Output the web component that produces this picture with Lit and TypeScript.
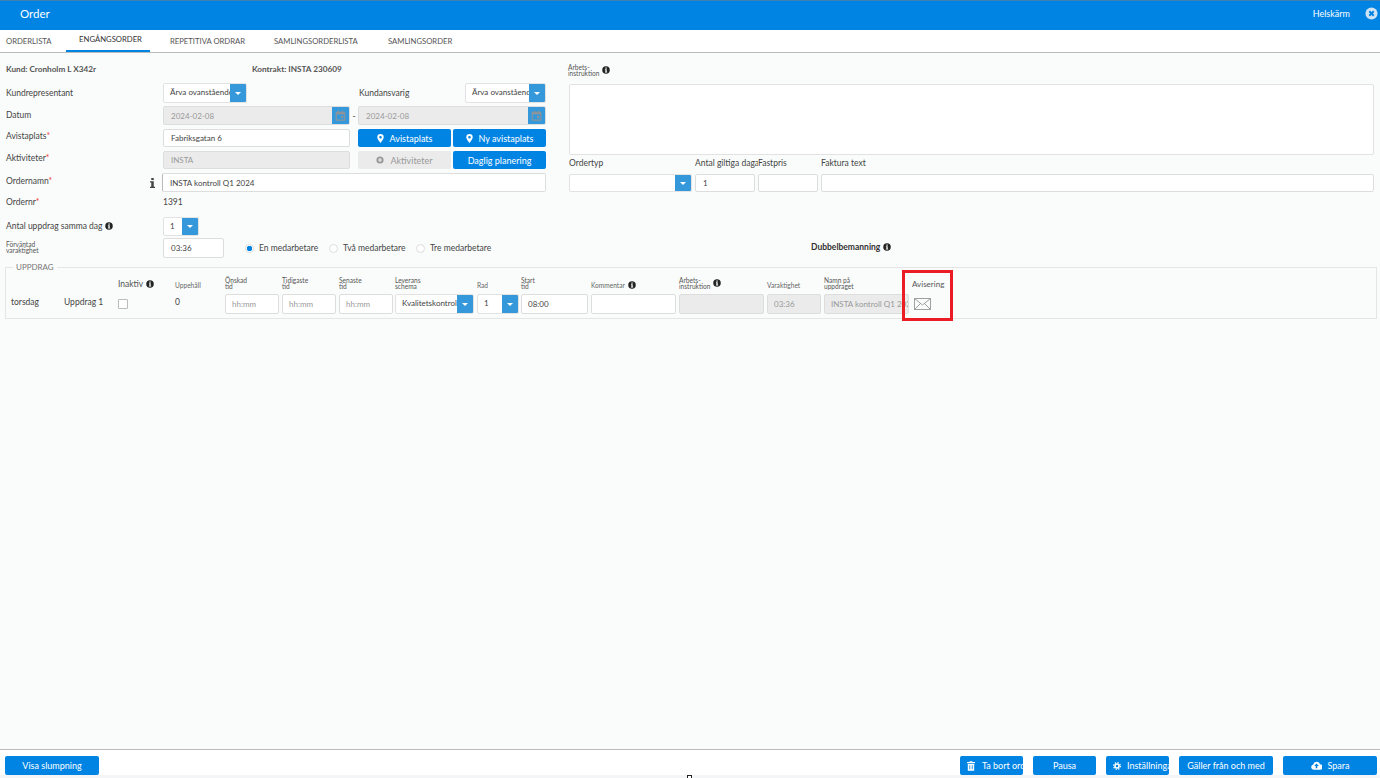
import { LitElement, css, html, svg } from "lit";
import { customElement } from "lit/decorators.js";

const info = (cls = "info") => html`<svg class=${cls} viewBox="0 0 16 16">
  <circle cx="8" cy="8" r="7.5" fill="#222"></circle>
  <rect x="6.8" y="3" width="2.6" height="2.4" fill="#fff"></rect>
  <path d="M5.8 6.6h3.6v5h1v1.4H5.8v-1.4h1V8h-1z" fill="#fff"></path>
</svg>`;

const caret = html`<svg class="caret" viewBox="0 0 8 4"><path d="M0 0h8L4 4z" fill="#fff"></path></svg>`;

const calendar = html`<svg class="cal" viewBox="0 0 12 12">
  <path d="M1.5 2h9a.8.8 0 0 1 .8.8v8a.8.8 0 0 1-.8.8h-9a.8.8 0 0 1-.8-.8v-8A.8.8 0 0 1 1.5 2zM2 5v5.4h8V5z" fill="#8a949b"></path>
  <rect x="3" y="0.5" width="1.5" height="2.5" fill="#8a949b"></rect>
  <rect x="7.5" y="0.5" width="1.5" height="2.5" fill="#8a949b"></rect>
  <rect x="6.500" y="6.500" width="2.500" height="2.500" fill="#8a949b"></rect>
</svg>`;

const pin = html`<svg class="ico pin" viewBox="0 0 10 14">
  <path fill-rule="evenodd" d="M5 0a5 5 0 0 1 5 5c0 2.8-3.4 7-5 9-1.600-2-5-6.200-5-9a5 5 0 0 1 5-5zm0 3a2 2 0 1 0 0 4 2 2 0 0 0 0-4z" fill="#fff"></path>
</svg>`;

const select = (value: string, cls = "") => html`
  <div class="select ${cls}">
    <span class="sel-text">${value}</span>
    <span class="sel-btn">${caret}</span>
  </div>
`;

const dateField = (value: string, cls: string) => html`
  <div class="input disabled date ${cls}">
    <span>${value}</span>
    <span class="cal-btn">${calendar}</span>
  </div>
`;

const radio = (label: string, cls: string, on = false) => html`
  <span class="radio-item ${cls}"><span class="radio ${on ? "on" : ""}"></span>${label}</span>
`;

const req = (label: string) => html`${label}<span class="req">*</span>`;

const stacked = (a: string, b: string) => html`<span class="stacked">${a}<br />${b}</span>`;

@customElement("app-root")
export class AppRoot extends LitElement {
  static styles = css`
    :host {
      display: flex;
      flex-direction: column;
      height: 778px;
      overflow: hidden;
      background: #fafcfb;
      color: #444;
      font-family: Lato, "Liberation Sans", sans-serif;
      font-size: 8.500px;
    }
    * {
      box-sizing: border-box;
    }
    .header {
      height: 30px;
      flex: none;
      background: #0084e4;
      border-top: 1px solid #3f80b0;
      color: #fff;
      display: flex;
      align-items: center;
      justify-content: space-between;
      padding: 0 2px 4px 20px;
    }
    .title {
      font-size: 11.500px;
    }
    .full {
      display: flex;
      align-items: center;
      gap: 15px;
      font-size: 9px;
    }
    .close {
      width: 13px;
      height: 13px;
    }
    .tabs {
      height: 23px;
      flex: none;
      display: flex;
      background: #fff;
      border-bottom: 1px solid #bbb;
      font-size: 7.700px;
      color: #555;
    }
    .tab {
      padding-top: 6px;
      text-transform: uppercase;
    }
    .tab.first {
      margin-left: 6px;
      width: 60px;
    }
    .tab.active {
      width: 84px;
      margin: 0 20px 0 0;
      text-align: center;
      padding: 4px 0 0 5px;
      border-bottom: 2px solid #0084e4;
      color: #333;
    }
    .tab.rep {
      width: 104px;
    }
    .tab.list {
      width: 114px;
    }
    .main {
      flex: 1;
      min-height: 0;
      padding: 10px 3px 0 6px;
    }
    .top {
      display: flex;
      height: 194px;
    }
    .left {
      width: 540px;
      flex: none;
    }
    .right {
      margin: -1px 0 0 22px;
      flex: 1;
      position: relative;
    }
    .row {
      display: flex;
      align-items: center;
    }
    .lab {
      width: 157px;
      flex: none;
    }
    .req {
      color: #e33;
    }
    .kund {
      height: 12px;
      font-weight: 700;
      font-size: 8.200px;
      margin-bottom: 8px;
      color: #555;
    }
    .kund .lab {
      width: 246px;
    }
    .r1 {
      height: 20px;
      margin-bottom: 3px;
    }
    .kansv {
      margin-left: 112px;
      width: 106px;
      flex: none;
    }
    .r2 {
      height: 19px;
      margin-bottom: 4px;
    }
    .r2 .lab {
      padding-bottom: 2px;
    }
    .dash {
      width: 8px;
      text-align: center;
      flex: none;
    }
    .r3 {
      height: 18px;
      margin-bottom: 4px;
    }
    .r3 .lab {
      padding-bottom: 4px;
    }
    .r5 {
      height: 19px;
      margin-bottom: 2px;
    }
    .r5 .lab {
      width: 150px;
      display: flex;
      align-items: center;
    }
    .r5 .lab-text {
      padding-bottom: 4px;
    }
    .r6 {
      height: 16px;
      margin-bottom: 7px;
    }
    .r7 {
      height: 19px;
      margin-bottom: 2px;
    }
    .r7 .lab {
      padding-bottom: 1px;
      display: flex;
      align-items: center;
    }
    .r8 {
      height: 20px;
    }
    .radios {
      margin-left: 21px;
      display: flex;
    }
    .input {
      height: 100%;
      background: #fff;
      border: 1px solid #ddd;
      border-radius: 2px;
      padding: 0 7px;
      display: flex;
      align-items: center;
      font-size: 8px;
      color: #444;
      overflow: hidden;
      white-space: nowrap;
    }
    .input.disabled {
      background: #ebebeb;
      color: #999;
    }
    .input.ph {
      color: #999;
    }
    .w187 {
      width: 187px;
    }
    .w188 {
      width: 188px;
    }
    .wide {
      width: 384px;
      margin-left: 6px;
      border-left-color: #bbb;
    }
    .w61 {
      width: 61px;
    }
    .date {
      position: relative;
    }
    .cal-btn {
      position: absolute;
      right: 0;
      top: 0;
      bottom: 0;
      width: 17px;
      background: #3498db;
      display: flex;
      align-items: center;
      justify-content: center;
    }
    .cal {
      width: 11px;
      height: 11px;
    }
    .select {
      height: 100%;
      background: #fff;
      border: 1px solid #e2e2e2;
      border-radius: 2px;
      display: flex;
      overflow: hidden;
      font-size: 8px;
      flex: none;
    }
    .select.w84 {
      width: 84px;
    }
    .select.w81 {
      width: 81px;
    }
    .select.w36 {
      width: 36px;
    }
    .sel-text {
      flex: 1;
      min-width: 0;
      overflow: hidden;
      white-space: nowrap;
      padding: 1px 0 0 6px;
      line-height: 14px;
    }
    .sel-btn {
      width: 16px;
      flex: none;
      background: #3498db;
      display: flex;
      align-items: center;
      justify-content: center;
    }
    .caret {
      width: 6px;
      height: 3px;
    }
    .btn {
      border: none;
      border-radius: 2px;
      background: #0084e4;
      color: #fff;
      font: inherit;
      font-size: 9px;
      height: 100%;
      padding: 0;
      display: flex;
      align-items: center;
      justify-content: center;
      gap: 6px;
      white-space: nowrap;
      overflow: hidden;
    }
    .btn.off {
      background: #ebebeb;
      color: #999;
    }
    .b93 {
      width: 93px;
    }
    .b93.gl {
      margin: 0 2px 0 8px;
    }
    .ico {
      width: 8px;
      height: 10px;
      flex: none;
    }
    .ico.pin {
      width: 7px;
      height: 9px;
    }
    .cloud {
      width: 11px;
      height: 9px;
      flex: none;
    }
    .info {
      width: 8px;
      height: 8px;
      flex: none;
      margin-left: 3px;
    }
    .i-big {
      width: 5px;
      height: 10px;
      margin: 0 1px 0 auto;
      flex: none;
    }
    .stacked {
      display: inline-block;
      font-size: 6.600px;
      line-height: 6px;
      color: #555;
    }
    .radio-item {
      display: inline-flex;
      align-items: center;
      gap: 5px;
      white-space: nowrap;
    }
    .rw84 {
      width: 84px;
    }
    .rw87 {
      width: 87px;
    }
    .radio {
      width: 9px;
      height: 9px;
      border-radius: 50%;
      border: 1px solid #ddd;
      background: #fff;
      flex: none;
    }
    .radio.on {
      background: radial-gradient(circle, #0084e4 0 2.500px, #fff 3px);
    }
    .instr-label {
      display: flex;
      align-items: center;
      height: 12px;
      margin: 2px 0 8px;
    }
    .textarea {
      width: 805px;
      height: 71px;
      background: #fff;
      border: 1px solid #e2e2e2;
      margin-left: 1px;
      border-radius: 2px;
    }
    .labels {
      display: grid;
      grid-template-columns: 126px 63px 63px 553px;
      margin-left: 1px;
      height: 16px;
      align-items: center;
      white-space: nowrap;
    }
    .labels span {
      overflow: hidden;
    }
    .fields {
      display: grid;
      grid-template-columns: 123px 60px 60px 553px;
      column-gap: 3px;
      height: 18px;
      margin: 3px 0 0 1px;
    }
    .fields .select {
      width: 100%;
    }
    .dubbel {
      position: absolute;
      left: 243px;
      top: 180px;
      font-weight: 700;
      font-size: 8.500px;
      display: flex;
      align-items: center;
      color: #333;
    }
    fieldset {
      position: relative;
      margin: 6px 0 0 -1px;
      padding: 0;
      height: 56px;
      width: 1372px;
      border: 1px solid #e5e5e5;
      min-width: 0;
    }
    legend {
      margin-left: 7px;
      padding: 0 3px;
      font-size: 8px;
      line-height: 9px;
      color: #777;
    }
    .task {
      display: grid;
      grid-template-columns: 53px 54px 57px 50px 57px 57px 56px 82px 44px 70px 88px 88px 57px 88px 1fr;
      grid-template-rows: 15px 20px;
      row-gap: 5px;
      padding: 2px 0 0 5px;
      align-items: center;
    }
    .head {
      color: #555;
      white-space: nowrap;
      display: flex;
      align-items: center;
      align-self: end;
    }
    .small {
      font-size: 6.600px;
      color: #666;
    }
    .avis {
      font-size: 8px;
    }
    .cell {
      padding-bottom: 4px;
    }
    .task .input,
    .task .select {
      width: 100%;
      height: 20px;
    }
    .task .input {
      padding: 0 6px;
    }
    .col-f {
      padding-right: 3px;
    }
    .col-f.tight {
      padding-right: 2px;
    }
    .check {
      width: 10px;
      height: 10px;
      border: 1px solid #bbb;
      border-radius: 1px;
      background: #fff;
    }
    .mail {
      width: 17px;
      height: 12px;
      margin-left: 2px;
      display: block;
    }
    .mark {
      position: absolute;
      left: 896px;
      top: -2px;
      width: 51px;
      height: 51px;
      border: 3px solid #ec1c24;
    }
    .footer {
      flex: none;
      height: 26px;
      background: #fff;
      border-top: 1px solid #bbb;
      padding: 6px 3px 0 5px;
      display: flex;
      gap: 10px;
    }
    .footer .btn {
      height: 19px;
    }
    .footer .b94 {
      width: 94px;
    }
    .footer .b63 {
      width: 63px;
    }
    .gap {
      flex: 1;
    }
    .strip {
      flex: none;
      height: 3px;
      background: #f3f5f6;
      position: relative;
    }
    .strip i {
      position: absolute;
      left: 687px;
      top: 0;
      width: 5px;
      height: 3px;
      border: 1px solid #222;
      border-bottom: none;
      background: #fff;
    }
    .clip {
      justify-content: flex-start;
      padding-left: 7px;
    }
    .clip.trash {
      gap: 7px;
    }
  `;

  render() {
    return html`
      <div class="header">
        <span class="title">Order</span>
        <span class="full">Helskärm
          <svg class="close" viewBox="0 0 14 14">
            <circle cx="7" cy="7" r="6.500" fill="#cfe3f4"></circle>
            ${svg`<path d="M4.600 4.600l4.800 4.800M9.400 4.600l-4.800 4.800" stroke="#0084e4" stroke-width="2"></path>`}
          </svg>
        </span>
      </div>
      <div class="tabs">
        <span class="tab first">Orderlista</span>
        <span class="tab active">Engångsorder</span>
        <span class="tab rep">Repetitiva ordrar</span>
        <span class="tab list">Samlingsorderlista</span>
        <span class="tab">Samlingsorder</span>
      </div>
      <div class="main">
        <div class="top">
          <div class="left">
            <div class="row kund"><span class="lab">Kund: Cronholm L X342r</span><span>Kontrakt: INSTA 230609</span></div>
            <div class="row r1">
              <span class="lab">Kundrepresentant</span>
              ${select("Ärva ovanstående", "w84")}
              <span class="kansv">Kundansvarig</span>
              ${select("Ärva ovanstående", "w81")}
            </div>
            <div class="row r2">
              <span class="lab">Datum</span>
              ${dateField("2024-02-08", "w187")}
              <span class="dash">-</span>
              ${dateField("2024-02-08", "w188")}
            </div>
            <div class="row r3">
              <span class="lab">${req("Avistaplats")}</span>
              <div class="input w187">Fabriksgatan 6</div>
              <button class="btn b93 gl">${pin}Avistaplats</button>
              <button class="btn b93">${pin}Ny avistaplats</button>
            </div>
            <div class="row r3">
              <span class="lab">${req("Aktiviteter")}</span>
              <div class="input disabled w187">INSTA</div>
              <button class="btn off b93 gl">
                <svg class="ico" viewBox="0 0 10 10"><circle cx="5" cy="5" r="4.500" fill="#999"></circle><path d="M5 2.500v5M2.500 5h5" stroke="#ebebeb" stroke-width="1.500"></path></svg>
                Aktiviteter
              </button>
              <button class="btn b93">Daglig planering</button>
            </div>
            <div class="row r5">
              <span class="lab"><span class="lab-text">${req("Ordernamn")}</span>
                <svg class="i-big" viewBox="0 0 6 12"><rect x="1.500" y="0" width="3" height="2.500" fill="#444"></rect><path d="M0 4h4.500v6.500H6V12H0v-1.500h1.500V5.500H0z" fill="#444"></path></svg>
              </span>
              <div class="input wide">INSTA kontroll Q1 2024</div>
            </div>
            <div class="row r6"><span class="lab">${req("Ordernr")}</span><span>1391</span></div>
            <div class="row r7">
              <span class="lab">Antal uppdrag samma dag ${info()}</span>
              ${select("1", "w36")}
            </div>
            <div class="row r8">
              <span class="lab">${stacked("Förväntad", "varaktighet")}</span>
              <div class="input w61">03:36</div>
              <span class="radios">
                ${radio("En medarbetare", "rw84", true)}${radio("Två medarbetare", "rw87")}${radio("Tre medarbetare", "rw84")}
              </span>
            </div>
          </div>
          <div class="right">
            <div class="instr-label">${stacked("Arbets-", "instruktion")}${info()}</div>
            <div class="textarea"></div>
            <div class="labels"><span>Ordertyp</span><span>Antal giltiga daga</span><span>Fastpris</span><span>Faktura text</span></div>
            <div class="fields">
              ${select("")}
              <div class="input">1</div>
              <div class="input"></div>
              <div class="input"></div>
            </div>
            <div class="dubbel">Dubbelbemanning ${info()}</div>
          </div>
        </div>
        <fieldset>
          <legend>UPPDRAG</legend>
          <div class="task">
            <span></span><span></span>
            <span class="head">Inaktiv ${info()}</span>
            <span class="head small">Uppehåll</span>
            <span class="head">${stacked("Önskad", "tid")}</span>
            <span class="head">${stacked("Tidigaste", "tid")}</span>
            <span class="head">${stacked("Senaste", "tid")}</span>
            <span class="head">${stacked("Leverans", "schema")}</span>
            <span class="head small">Rad</span>
            <span class="head">${stacked("Start", "tid")}</span>
            <span class="head small">Kommentar ${info()}</span>
            <span class="head">${stacked("Arbets-", "instruktion")}${info()}</span>
            <span class="head small">Varaktighet</span>
            <span class="head">${stacked("Namn på", "uppdraget")}</span>
            <span class="head avis">Avisering</span>

            <span class="cell">torsdag</span>
            <span class="cell">Uppdrag 1</span>
            <span class="check"></span>
            <span class="cell">0</span>
            <div class="col-f"><div class="input ph">hh:mm</div></div>
            <div class="col-f"><div class="input ph">hh:mm</div></div>
            <div class="col-f tight"><div class="input ph">hh:mm</div></div>
            <div class="col-f">${select("Kvalitetskontroll")}</div>
            <div class="col-f tight">${select("1")}</div>
            <div class="col-f"><div class="input">08:00</div></div>
            <div class="col-f"><div class="input"></div></div>
            <div class="col-f"><div class="input disabled"></div></div>
            <div class="col-f"><div class="input disabled">03:36</div></div>
            <div class="col-f"><div class="input disabled">INSTA kontroll Q1 2024</div></div>
            <svg class="mail" viewBox="0 0 17 12">
              <path d="M.5.500h16v11H.5zM.5.500l8 6.500 8-6.500M.5 11.500l6-6M16.500 11.500l-6-6" fill="none" stroke="#888" stroke-width=".8"></path>
            </svg>
          </div>
          <div class="mark"></div>
        </fieldset>
      </div>
      <div class="footer">
        <button class="btn b94">Visa slumpning</button>
        <span class="gap"></span>
        <button class="btn clip trash b63">
          <svg class="ico" viewBox="0 0 10 12"><path fill-rule="evenodd" d="M3.500 0h3l.5 1h3v1.500H0V1h3zM1 3.500h8V12H1zM3 5v5h1V5zm3 0v5h1V5z" fill="#fff"></path></svg>Ta bort order
        </button>
        <button class="btn b63">Pausa</button>
        <button class="btn clip b63">
          <svg class="ico" viewBox="0 0 12 12">
            <circle cx="6" cy="6" r="3" fill="none" stroke="#fff" stroke-width="2.400"></circle>
            <circle cx="6" cy="6" r="5" fill="none" stroke="#fff" stroke-width="2" stroke-dasharray="2 1.930"></circle>
          </svg>Inställningar
        </button>
        <button class="btn b94">Gäller från och med</button>
        <button class="btn b94">
          <svg class="cloud" viewBox="0 0 14 11"><path fill-rule="evenodd" d="M3.500 11a3.500 3.500 0 0 1-.6-6.900A4.500 4.500 0 0 1 11.500 4a3.500 3.500 0 0 1-.5 7zM7 3L4 6.200h2V9h2V6.200h2z" fill="#fff"></path></svg>
          Spara
        </button>
      </div>
      <div class="strip"><i></i></div>
    `;
  }
}
